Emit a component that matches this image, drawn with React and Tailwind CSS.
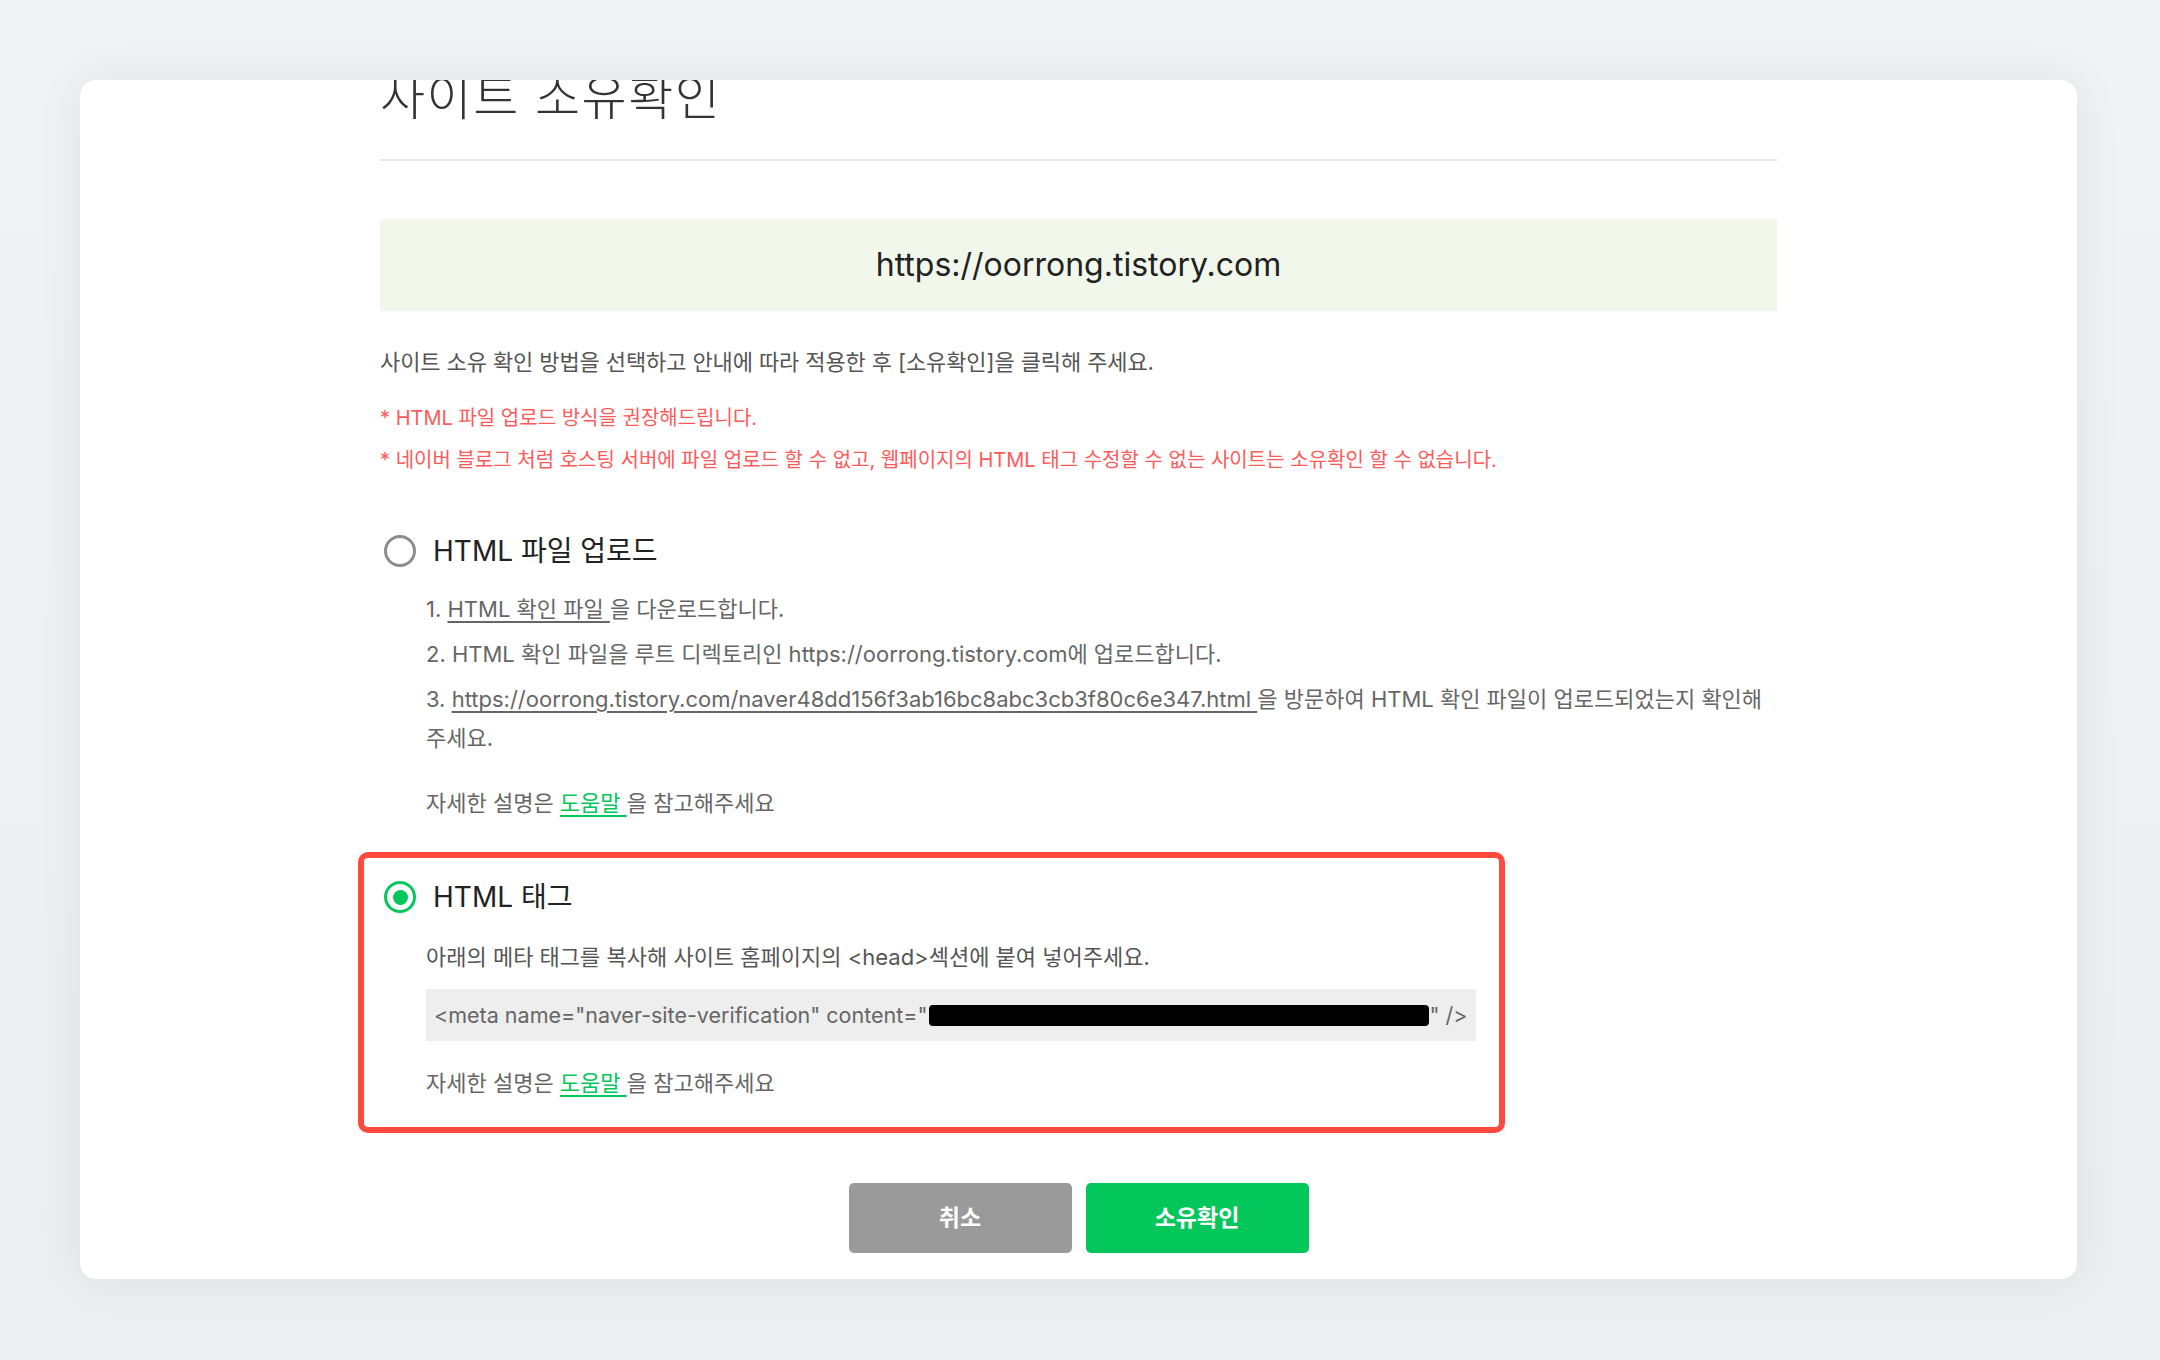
import React from "react";

function Radio({ checked }) {
  return checked ? (
    <span className="flex h-[32px] w-[32px] shrink-0 items-center justify-center rounded-full border-[3px] border-[#03c75a] bg-white">
      <span className="h-[15px] w-[15px] rounded-full bg-[#03c75a]" />
    </span>
  ) : (
    <span className="h-[32px] w-[32px] shrink-0 rounded-full border-[3px] border-[#8c8c8c] bg-white" />
  );
}

function Help() {
  return (
    <p className="text-[22px] leading-[39px] text-[#666]">
      자세한 설명은{" "}
      <span className="text-[#03c75a] underline underline-offset-[4px]">도움말 </span>
      을 참고해주세요
    </p>
  );
}

export default function App() {
  return (
    <div className="h-[1360px] w-full overflow-hidden bg-[linear-gradient(#f1f2f4,#eceef0)] pl-[80px] pr-[83px] pt-[80px] font-['Inter','Noto_Sans_CJK_KR',sans-serif]">
      <div className="overflow-hidden rounded-[16px] bg-white pb-[26px] shadow-[0_0_48px_rgba(0,0,0,0.07)]">
        <div className="mx-auto w-[1397px]">
          <h1 className="-mt-[7px] text-[49px] font-light leading-[49px] tracking-[1.5px] text-[#333]">
            사이트 소유확인
          </h1>
          <div className="mt-[37px] h-[2px] bg-[#e8e8e8]" />

          <div className="mt-[58px] flex h-[92px] items-center justify-center bg-[#f1f7ea] text-[32px] text-[#222]">
            https://oorrong.tistory.com
          </div>

          <p className="mt-[36px] text-[22px] leading-[30px] tracking-[-0.1px] text-[#555]">
            사이트 소유 확인 방법을 선택하고 안내에 따라 적용한 후 [소유확인]을 클릭해 주세요.
          </p>

          <div className="mt-[20px] text-[20px] leading-[42px] text-[#ff5a5a]">
            <p>* HTML 파일 업로드 방식을 권장해드립니다.</p>
            <p>
              * 네이버 블로그 처럼 호스팅 서버에 파일 업로드 할 수 없고, 웹페이지의 HTML 태그 수정할 수 없는 사이트는 소유확인 할 수 없습니다.
            </p>
          </div>

          {/* HTML file upload */}
          <div className="mt-[52px] flex h-[36px] items-center gap-[17px] pl-[4px]">
            <Radio checked={false} />
            <span className="text-[28px] text-[#222]">HTML 파일 업로드</span>
          </div>
          <div className="ml-[46px] mt-[21px]">
            <ol className="flex flex-col gap-[6px] text-[22px] leading-[39px] text-[#666]">
              <li>
                1.{" "}
                <span className="underline underline-offset-[4px]">HTML 확인 파일 </span>
                을 다운로드합니다.
              </li>
              <li>2. HTML 확인 파일을 루트 디렉토리인 https://oorrong.tistory.com에 업로드합니다.</li>
              <li>
                3.{" "}
                <span className="underline underline-offset-[4px]">
                  https://oorrong.tistory.com/naver48dd156f3ab16bc8abc3cb3f80c6e347.html{" "}
                </span>
                을 방문하여 HTML 확인 파일이 업로드되었는지 확인해
                <br />
                주세요.
              </li>
            </ol>
            <div className="mt-[26px]">
              <Help />
            </div>
          </div>

          {/* HTML tag */}
          <div className="relative mt-[56px]">
            <div className="pointer-events-none absolute -left-[22px] -top-[27px] h-[281px] w-[1147px] rounded-[10px] border-[6px] border-[#ff4a3d]" />
            <div className="flex h-[36px] items-center gap-[17px] pl-[4px]">
              <Radio checked />
              <span className="text-[28px] text-[#222]">HTML 태그</span>
            </div>
            <div className="ml-[46px]">
              <p className="mt-[27px] text-[22px] leading-[30px] text-[#555]">
                아래의 메타 태그를 복사해 사이트 홈페이지의 &lt;head&gt;섹션에 붙여 넣어주세요.
              </p>
              <div className="mt-[17px] inline-flex h-[52px] items-center bg-[#eeeeee] px-[8px] text-[21.5px] text-[#666]">
                <span>&lt;meta name="naver-site-verification" content="</span>
                <span className="mx-[1px] inline-block h-[21px] w-[500px] rounded-[4px] bg-black" />
                <span>" /&gt;</span>
              </div>
              <div className="mt-[23px]">
                <Help />
              </div>
            </div>
          </div>
        </div>

        <div className="mt-[80px] flex justify-center gap-[14px]">
          <button className="flex h-[70px] w-[223px] items-center justify-center rounded-[5px] bg-[#9a9a9a] text-[23px] font-semibold text-white">
            취소
          </button>
          <button className="flex h-[70px] w-[223px] items-center justify-center rounded-[5px] bg-[#03c75a] text-[23px] font-semibold text-white">
            소유확인
          </button>
        </div>
      </div>
    </div>
  );
}
